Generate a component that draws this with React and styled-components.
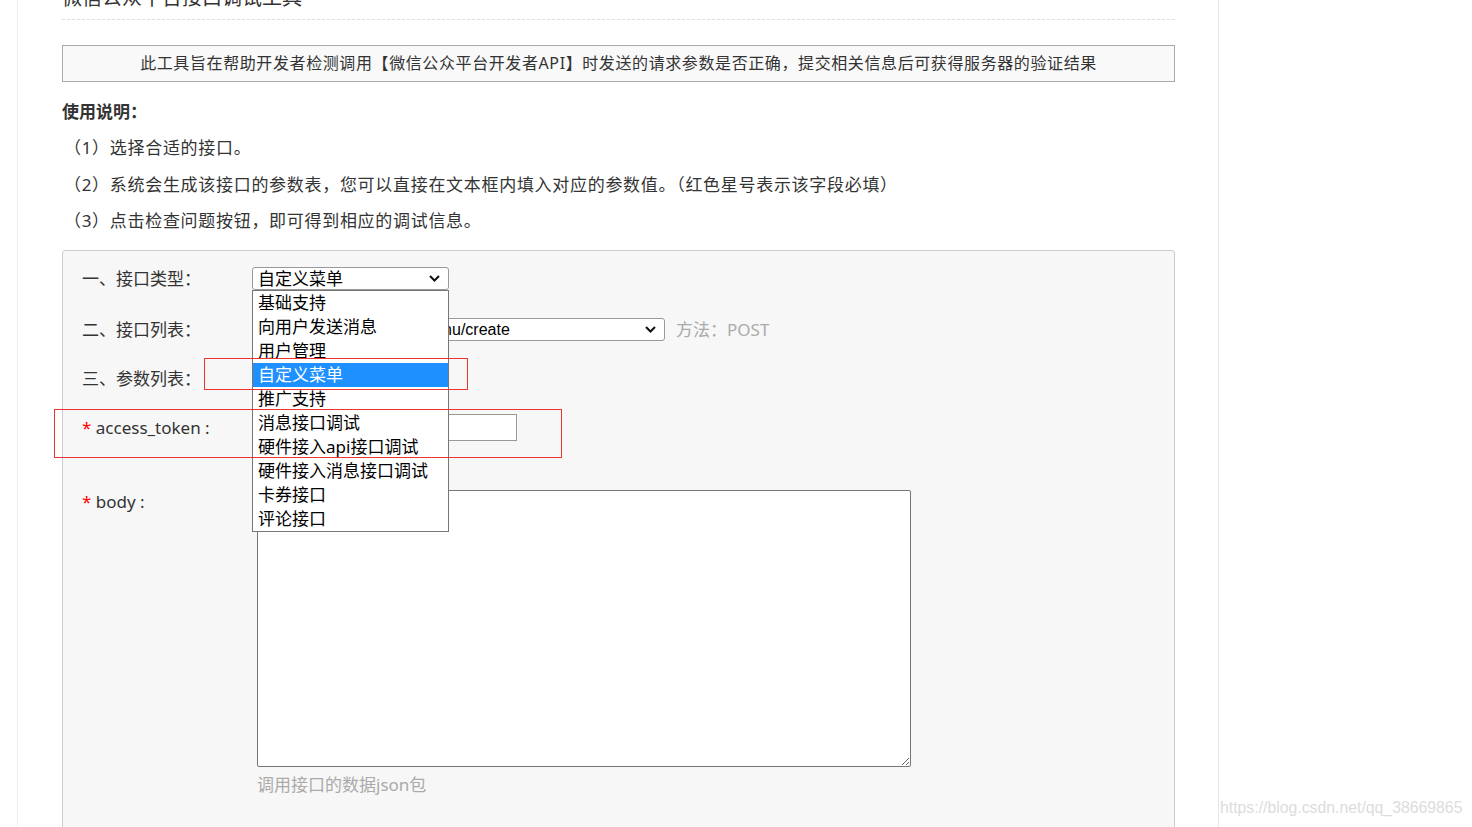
import styled, { createGlobalStyle } from "styled-components";

const typeOptions = [
  "基础支持",
  "向用户发送消息",
  "用户管理",
  "自定义菜单",
  "推广支持",
  "消息接口调试",
  "硬件接入api接口调试",
  "硬件接入消息接口调试",
  "卡券接口",
  "评论接口",
];

const steps = [
  "（1）选择合适的接口。",
  "（2）系统会生成该接口的参数表，您可以直接在文本框内填入对应的参数值。（红色星号表示该字段必填）",
  "（3）点击检查问题按钮，即可得到相应的调试信息。",
];

const Chevron = () => (
  <svg width="11" height="7" viewBox="0 0 11 7">
    <path d="M1 1 L5.5 5.5 L10 1" fill="none" stroke="#111" strokeWidth="2" />
  </svg>
);

function App() {
  return (
    <Page>
      <GlobalStyle />
      <Column>
        <Title>微信公众平台接口调试工具</Title>
        <Notice>
          此工具旨在帮助开发者检测调用【微信公众平台开发者API】时发送的请求参数是否正确，提交相关信息后可获得服务器的验证结果
        </Notice>
        <HelpTitle>使用说明：</HelpTitle>
        {steps.map((s) => (
          <Step key={s}>{s}</Step>
        ))}
        <Panel>
          <Row>
            <Label>一、接口类型：</Label>
            <SelectWrap>
              <Select $width={197}>
                <span>自定义菜单</span>
                <Chevron />
              </Select>
              <OptionList>
                {typeOptions.map((o) => (
                  <Option key={o} $active={o === "自定义菜单"}>
                    {o}
                  </Option>
                ))}
              </OptionList>
            </SelectWrap>
          </Row>
          <Row $gap={28}>
            <Label>二、接口列表：</Label>
            <Select $width={413} $latin>
              <span>自定义菜单创建接口 /menu/create</span>
              <Chevron />
            </Select>
            <Method>方法：POST</Method>
          </Row>
          <Row $gap={26}>
            <Label>三、参数列表：</Label>
          </Row>
          <Row $gap={24}>
            <Label>
              <Star>*</Star> access_token :
            </Label>
            <TextInput />
          </Row>
          <Row $gap={49} $top>
            <Label>
              <Star>*</Star> body :
            </Label>
            <Field>
              <BodyArea />
              <Hint>调用接口的数据json包</Hint>
            </Field>
          </Row>
          <Marker $x={141} $y={107} $w={264} $h={32} />
          <Marker $x={-9} $y={158} $w={508} $h={49} />
        </Panel>
      </Column>
      <Watermark>https://blog.csdn.net/qq_38669865</Watermark>
    </Page>
  );
}

export default App;

const GlobalStyle = createGlobalStyle`
  html, body {
    margin: 0;
    padding: 0;
    background: #fff;
    overflow: hidden;
  }
  body {
    font-family: "Noto Sans", "Noto Sans CJK SC", sans-serif;
    color: #333;
  }
`;

const Page = styled.div`
  position: relative;
  height: 827px;
  overflow: hidden;
`;

const Column = styled.div`
  margin-left: 17px;
  width: 1113px;
  height: 900px;
  padding: 0 43px 0 44px;
  border-left: 1px solid #eee;
  border-right: 1px solid #e6e6e6;
`;

const Title = styled.div`
  margin-top: -17px;
  height: 30px;
  padding-bottom: 6px;
  font-size: 20px;
  line-height: 30px;
  color: #333;
  border-bottom: 1px dashed #ddd;
`;

const Notice = styled.div`
  margin-top: 25px;
  height: 35px;
  line-height: 35px;
  border: 1px solid #aaa;
  background: #f9f9f9;
  text-align: center;
  font-size: 16px;
  letter-spacing: 0.6px;
  color: #333;
`;

const HelpTitle = styled.div`
  margin-top: 12px;
  line-height: 36px;
  font-size: 17px;
  font-weight: bold;
`;

const Step = styled.div`
  line-height: 36.5px;
  font-size: 17px;
  letter-spacing: 0.7px;
  padding-left: 2px;
`;

const Panel = styled.div`
  position: relative;
  margin-top: 10px;
  height: 700px;
  padding: 16px 19px 0;
  background: #f7f7f7;
  border: 1px solid #ccc;
  border-radius: 3px;
`;

const Row = styled.div`
  display: flex;
  align-items: ${(p) => (p.$top ? "flex-start" : "center")};
  min-height: 23px;
  margin-top: ${(p) => p.$gap || 0}px;
`;

const Label = styled.div`
  width: 170px;
  height: 23px;
  flex-shrink: 0;
  font-size: 17px;
  line-height: 23px;
  color: #333;
`;

const Star = styled.span`
  color: #f00;
`;

const SelectWrap = styled.div`
  position: relative;
  height: 23px;
`;

const Select = styled.div`
  box-sizing: border-box;
  display: flex;
  align-items: center;
  justify-content: space-between;
  width: ${(p) => p.$width}px;
  height: 23px;
  padding: 0 8px 0 ${(p) => (p.$latin ? 15 : 5)}px;
  background: #fff;
  border: 1px solid #999;
  border-radius: 3px;
  font-size: ${(p) => (p.$latin ? 16 : 17)}px;
  line-height: 21px;
  font-family: ${(p) =>
    p.$latin
      ? `"Liberation Sans", "Noto Sans CJK SC", sans-serif`
      : `"Noto Sans", "Noto Sans CJK SC", sans-serif`};
  color: #000;
  white-space: nowrap;
  overflow: hidden;

  span {
    overflow: hidden;
    height: 21px;
  }
`;

const OptionList = styled.div`
  position: absolute;
  top: 23px;
  left: 0;
  z-index: 5;
  box-sizing: border-box;
  width: 197px;
  background: #fff;
  border: 1px solid #767676;
`;

const Option = styled.div`
  height: 24px;
  line-height: 24px;
  padding-left: 5px;
  font-size: 17px;
  white-space: nowrap;
  color: ${(p) => (p.$active ? "#fff" : "#000")};
  background: ${(p) => (p.$active ? "#1e90ff" : "transparent")};
`;

const Method = styled.div`
  margin-left: 11px;
  height: 23px;
  font-size: 17px;
  line-height: 23px;
  color: #aaa;
`;

const TextInput = styled.input`
  box-sizing: border-box;
  margin: 0 0 0 5px;
  padding: 0;
  width: 260px;
  height: 27px;
  border: 1px solid #999;
  background: #fff;
  outline: none;
`;

const Field = styled.div`
  display: flex;
  flex-direction: column;
  margin-left: 5px;
`;

const BodyArea = styled.textarea`
  box-sizing: border-box;
  display: block;
  width: 654px;
  height: 277px;
  margin: 0;
  border: 1px solid #767676;
  border-radius: 2px;
  background: #fff;
  outline: none;
`;

const Hint = styled.div`
  margin-top: 6px;
  font-size: 17px;
  line-height: 23px;
  color: #aaa;
`;

const Marker = styled.div`
  position: absolute;
  box-sizing: border-box;
  left: ${(p) => p.$x}px;
  top: ${(p) => p.$y}px;
  width: ${(p) => p.$w}px;
  height: ${(p) => p.$h}px;
  border: 1px solid #e33;
  z-index: 6;
  pointer-events: none;
`;

const Watermark = styled.div`
  position: absolute;
  left: 1220px;
  top: 797px;
  font-family: "Liberation Sans", sans-serif;
  font-size: 15.8px;
  line-height: 22px;
  color: #dcdcdc;
`;
